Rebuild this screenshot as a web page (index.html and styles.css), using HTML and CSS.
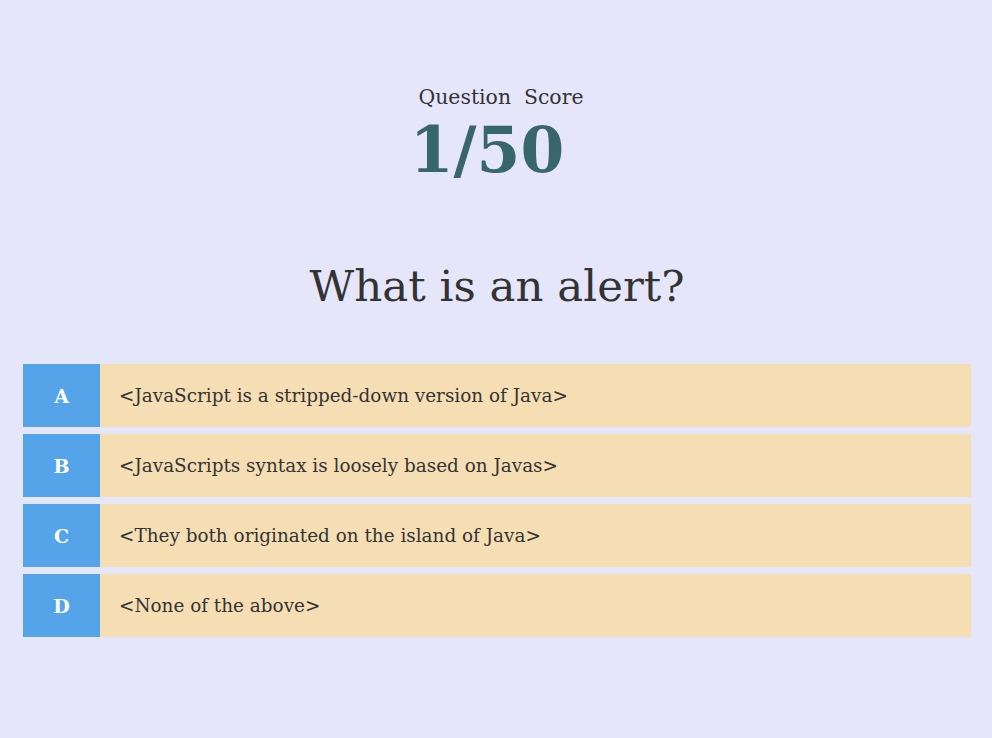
FILE: index.html
```html
<!DOCTYPE html>
<html>
<head>
<meta charset="utf-8">
<link rel="stylesheet" href="styles.css">
</head>
<body>
<main class="quiz">
  <header class="score">
    <div class="score-label">Question&nbsp; Score</div>
    <div class="score-value">1/50</div>
  </header>
  <h1 class="question">What is an alert?</h1>
  <ul class="options">
    <li class="option"><span class="letter">A</span><span class="answer">&lt;JavaScript is a stripped-down version of Java&gt;</span></li>
    <li class="option"><span class="letter">B</span><span class="answer">&lt;JavaScripts syntax is loosely based on Javas&gt;</span></li>
    <li class="option"><span class="letter">C</span><span class="answer">&lt;They both originated on the island of Java&gt;</span></li>
    <li class="option"><span class="letter">D</span><span class="answer">&lt;None of the above&gt;</span></li>
  </ul>
</main>
</body>
</html>
```
FILE: styles.css
```css
html, body {
  margin: 0;
  padding: 0;
}
body {
  background: #e6e6fa;
  font-family: "DejaVu Serif", "Liberation Serif", serif;
  color: #333333;
  width: 992px;
  height: 738px;
}
.quiz {
  padding: 82px 21px 0 23px;
  display: flex;
  flex-direction: column;
}
.score {
  display: flex;
  flex-direction: column;
  align-items: center;
}
.score-label {
  font-size: 20.4px;
  line-height: 30px;
  padding-left: 8px;
  color: #333;
}
.score-value {
  font-size: 63px;
  font-weight: bold;
  line-height: 76px;
  padding-right: 20px;
  color: #37676a;
}
.question {
  margin: 68px 0 0;
  text-align: center;
  font-weight: normal;
  font-size: 43.5px;
  line-height: 60px;
  color: #333;
}
.options {
  list-style: none;
  margin: 48px 0 0;
  padding: 0;
  display: flex;
  flex-direction: column;
  gap: 7px;
}
.option {
  display: flex;
  height: 63px;
  background: #f5deb3;
  align-items: stretch;
}
.letter {
  width: 77px;
  flex: none;
  background: #55a4e9;
  color: #ffffff;
  font-size: 19px;
  font-weight: bold;
  display: flex;
  align-items: center;
  justify-content: center;
}
.answer {
  display: flex;
  align-items: center;
  padding-left: 19px;
  font-size: 18.4px;
}
```
